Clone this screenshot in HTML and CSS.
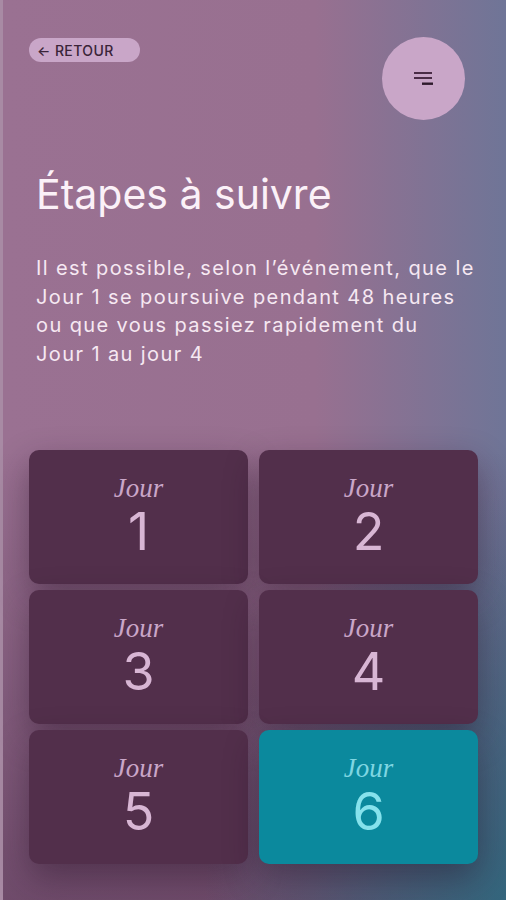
FILE: index.html
```html
<!DOCTYPE html>
<html lang="fr">
<head>
<meta charset="UTF-8">
<meta name="viewport" content="width=device-width, initial-scale=1.0">
<title>Étapes à suivre</title>
<link rel="stylesheet" href="styles.css">
</head>
<body>

<div class="screen">
    <div class="top-bar">
        <a class="btn-back" href="#">&larr; RETOUR</a>
        <button class="btn-menu" aria-label="Menu">
            <svg width="20" height="14" viewBox="0 0 20 14">
                <rect x="0" y="0" width="18" height="2" fill="#4a2c46"/>
                <rect x="0" y="5" width="18" height="2" fill="#4a2c46"/>
                <rect x="8" y="10.5" width="11" height="2.4" fill="#2e1a2c"/>
            </svg>
        </button>
    </div>

    <h1 class="title">Étapes à suivre</h1>

    <p class="intro">Il est possible, selon l’événement, que le<br>
        Jour 1 se poursuive pendant 48 heures<br>
        ou que vous passiez rapidement du<br>
        Jour 1 au jour 4</p>

    <!-- Grille des jours -->
    <div class="days">
        <div class="day"><span class="day-label">Jour</span><span class="day-num">1</span></div>
        <div class="day"><span class="day-label">Jour</span><span class="day-num">2</span></div>
        <div class="day"><span class="day-label">Jour</span><span class="day-num">3</span></div>
        <div class="day"><span class="day-label">Jour</span><span class="day-num">4</span></div>
        <div class="day"><span class="day-label">Jour</span><span class="day-num">5</span></div>
        <div class="day active"><span class="day-label">Jour</span><span class="day-num">6</span></div>
    </div>
</div>

</body>
</html>
```

FILE: styles.css
```css
/* Mise en page générale */
body {
    margin: 0;
    padding: 0;
    font-family: Inter, "Open Sans", sans-serif;
    background-color: #987090;
}

.screen {
    box-sizing: border-box;
    min-height: 900px;
    padding: 38px 28px 0 29px;
    border-left: 3px solid #a88aa4;
    background:
        radial-gradient(ellipse 60% 45% at 100% 100%, rgba(40, 110, 130, 0.75), rgba(40, 110, 130, 0) 100%),
        linear-gradient(to bottom, rgba(60, 30, 60, 0) 50%, rgba(60, 30, 60, 0.45) 100%),
        linear-gradient(to right, #9a7192 0%, #987090 62%, #6f7597 100%);
}

.top-bar {
    display: flex;
    justify-content: space-between;
    align-items: flex-start;
}

.btn-back {
    display: inline-flex;
    align-items: center;
    height: 24px;
    width: 111px;
    box-sizing: border-box;
    padding: 0 8px;
    margin-left: -3px;
    border-radius: 12px;
    background-color: #c9a6c8;
    color: #3a2438;
    font-size: 14px;
    font-weight: 500;
    letter-spacing: 0.4px;
    text-decoration: none;
}

.btn-menu {
    width: 83px;
    height: 83px;
    margin: -1px 13px 0 0;
    border: none;
    border-radius: 50%;
    background-color: #c9a6c8;
    display: flex;
    align-items: center;
    justify-content: center;
    padding: 0;
    cursor: pointer;
}

.title {
    margin: 49px 0 0 4px;
    font-size: 41px;
    font-weight: 400;
    line-height: 50px;
    color: #fbf1f8;
}

.intro {
    margin: 35px 0 0 4px;
    font-size: 20px;
    line-height: 28.5px;
    letter-spacing: 1.4px;
    white-space: nowrap;
    color: #f6e8f2;
}

.days {
    display: grid;
    grid-template-columns: 219px 219px;
    grid-auto-rows: 134px;
    column-gap: 11px;
    row-gap: 6px;
    margin: 82px 0 0 -3px;
}

.day {
    display: flex;
    flex-direction: column;
    align-items: center;
    padding-top: 22px;
    box-sizing: border-box;
    border-radius: 10px;
    background-color: #522f4b;
    color: #d8b6d4;
    box-shadow: 0 14px 34px rgba(35, 15, 35, 0.42);
}

.day-label {
    font-family: "Liberation Serif", "DejaVu Serif", serif;
    font-style: italic;
    font-size: 27px;
    line-height: 32px;
    color: #c9a6c8;
}

.day-num {
    font-size: 52px;
    font-weight: 400;
    line-height: 56px;
}

.day.active {
    background-color: #0b899d;
    color: #86e2ec;
}

.day.active .day-label {
    color: #7fd6e2;
}
```
